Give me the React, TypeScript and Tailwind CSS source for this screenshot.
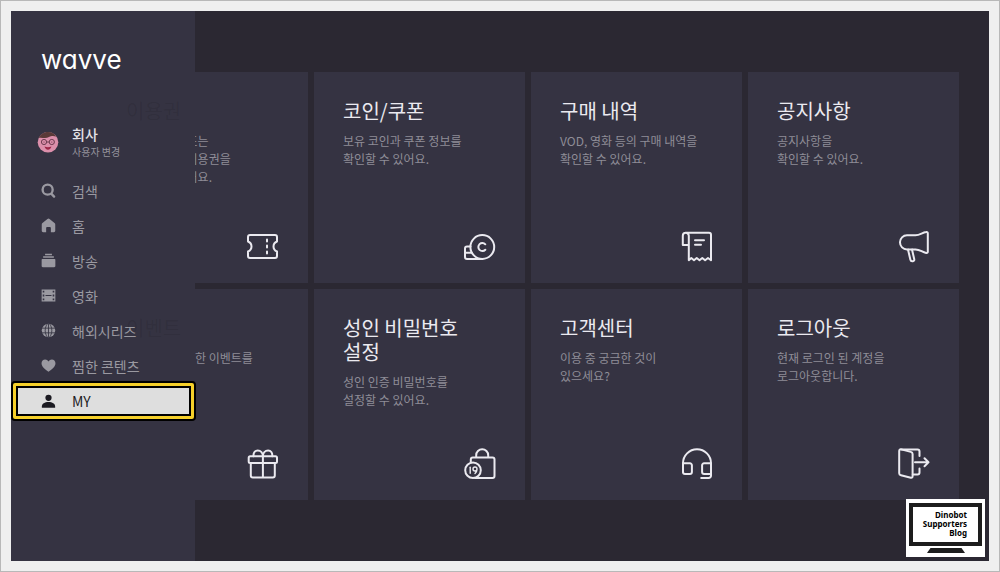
import type { ReactNode } from "react";

type MenuItem = { label: string; icon: ReactNode };

type Card = {
  title: string[];
  description: string[];
  icon: ReactNode;
  covered?: boolean;
};

const menu: MenuItem[] = [
  {
    label: "검색",
    icon: (
      <g fill="none" stroke="currentColor" strokeWidth="2.2" strokeLinecap="round">
        <circle cx="6.2" cy="6.2" r="4.7" />
        <path d="M9.8 10.2l2.4 2.500" />
      </g>
    ),
  },
  {
    label: "홈",
    icon: (
      <path
        d="M6 .9a1.600 1.600 0 0 1 2 0l4.600 3.800c.4.300.7.800.7 1.300v6c0 .8-.5 1.300-1.300 1.300H9.200V9.600c0-.8-.4-1.200-1.100-1.200H5.900c-.7 0-1.100.4-1.100 1.200v3.700H2C1.200 13.300.7 12.800.7 12V6c0-.5.3-1 .7-1.300z"
        fill="currentColor"
      />
    ),
  },
  {
    label: "방송",
    icon: (
      <path
        d="M3.800.8h6.400v1.300H3.800zM2 3.100h10v1.400H2zM1.200 5.600h11.600c.4 0 .6.200.6.600v5.900c0 .7-.4 1.100-1.100 1.100H1.700c-.7 0-1.100-.4-1.100-1.100V6.200c0-.4.2-.6.6-.6z"
        fill="currentColor"
      />
    ),
  },
  {
    label: "영화",
    icon: (
      <path
        d="M.6 1.300h12.800v11.400H.6zM1.600 2.500v1.700h1.500V2.500zM1.600 6.100v1.800h1.500V6.100zM1.600 9.800v1.700h1.500V9.800zM10.900 2.500v1.700h1.500V2.500zM10.900 6.100v1.800h1.500V6.100zM10.900 9.800v1.700h1.500V9.800zM4.200 6.600v.8h5.600v-.8z"
        fill="currentColor"
        fillRule="evenodd"
      />
    ),
  },
  {
    label: "해외시리즈",
    icon: (
      <g>
        <circle cx="7" cy="7" r="6.300" fill="currentColor" />
        <path
          d="M.7 4.800h12.600M.7 9.200h12.600M7 .7v12.600M6 .7C3.200 4.500 3.200 9.500 6 13.300M8 .7c2.800 3.800 2.800 8.800 0 12.600"
          fill="none"
          stroke="#353342"
          strokeWidth="0.800"
        />
      </g>
    ),
  },
  {
    label: "찜한 콘텐츠",
    icon: (
      <path
        d="M7 12.900C3.400 10.400.5 8 .5 5 .5 3 2 1.500 3.900 1.500c1.200 0 2.400.7 3.100 1.800.7-1.100 1.900-1.800 3.100-1.800C12 1.500 13.500 3 13.500 5c0 3-2.900 5.400-6.500 7.900z"
        fill="currentColor"
      />
    ),
  },
];

const cards: Card[] = [
  {
    title: ["이용권"],
    description: ["이용권 구매 또는", "보유하신 내 이용권을", "확인할 수 있어요."],
    covered: true,
    icon: (
      <>
        <path d="M3 4h25a2 2 0 0 1 2 2v4.500c-2 .8-3.500 2.600-3.500 5s1.500 4.200 3.500 5V25a2 2 0 0 1-2 2H3a2 2 0 0 1-2-2v-4.500c2-.8 3.500-2.600 3.500-5s-1.500-4.200-3.500-5V6a2 2 0 0 1 2-2z" />
        <path d="M20 8.500v2M20 14.500v2M20 20.500v2" />
      </>
    ),
  },
  {
    title: ["코인/쿠폰"],
    description: ["보유 코인과 쿠폰 정보를", "확인할 수 있어요."],
    icon: (
      <>
        <circle cx="18.300" cy="16" r="11.900" />
        <path d="M21.300 13.300a4 4 0 1 0 0 5.400M6.500 15.500H3a2 2 0 0 0-2 2v8.400a2 2 0 0 0 2 2h15.300M1 21.700h6.500" />
      </>
    ),
  },
  {
    title: ["구매 내역"],
    description: ["VOD, 영화 등의 구매 내역을", "확인할 수 있어요."],
    icon: (
      <>
        <path d="M4.500 1.800H28a2 2 0 0 1 2 2v25.400l-3-2.200-2.900 2.200-2.800-2.200-2.800 2.200-2.800-2.200-2.700 2.200-2.700-2.200-2.500 2.200V4.800a3 3 0 0 0-6 0V14h6" />
        <path d="M14 9.300h9M14 13.700h6" />
      </>
    ),
  },
  {
    title: ["공지사항"],
    description: ["공지사항을", "확인할 수 있어요."],
    icon: (
      <>
        <path d="M9 4.300h8.500c4.500 0 6.500-2.600 10.700-3.200 1-.2 1.600.4 1.600 1.300v18.300c0 1-.6 1.500-1.600 1.300-4.200-.8-6.200-3.600-10.700-3.600H9A7.050 7.050 0 0 1 9 4.300z" />
        <path d="M10 18.600l2.400 10.200c.3 1.300 1.200 1.700 2.400 1.500 1.200-.3 1.700-1.100 1.400-2.300L14 18.600" />
      </>
    ),
  },
  {
    title: ["이벤트"],
    description: ["진행중인 다양한 이벤트를", "만나보세요."],
    covered: true,
    icon: (
      <>
        <rect x="1.700" y="8.300" width="28.300" height="6.800" rx="1.500" />
        <path d="M3.800 15.200v12.300a2 2 0 0 0 2 2h20a2 2 0 0 0 2-2V15.200M15.900 8.300v21.200" />
        <path d="M6.500 8.200c-.3-3.400 1.500-5.800 4.200-5.800 3 0 5.200 2.600 5.200 5.900 0-3.300 2.200-5.900 5.200-5.900 2.700 0 4.500 2.400 4.200 5.800" />
      </>
    ),
  },
  {
    title: ["성인 비밀번호", "설정"],
    description: ["성인 인증 비밀번호를", "설정할 수 있어요."],
    icon: (
      <>
        <path d="M6.800 14v-2.500a2 2 0 0 1 2-2h19.700a2 2 0 0 1 2 2V28a2 2 0 0 1-2 2H11M12.200 9.500V7.200a6 6 0 0 1 12 0v2.300" />
        <circle cx="9" cy="22.300" r="7.800" />
        <path d="M6.200 19.300v6" strokeWidth="1.400" />
        <path d="M13 21a2 2 0 1 0-4 0 2 2 0 0 0 4 0c0 2-.8 3.400-2 4.500" strokeWidth="1.400" />
      </>
    ),
  },
  {
    title: ["고객센터"],
    description: ["이용 중 궁금한 것이", "있으세요?"],
    icon: (
      <>
        <path d="M2 24V15.300a14 14 0 0 1 28 0v12.400a2.300 2.300 0 0 1-2.300 2.300h-7.500" />
        <path d="M2 15.300h6.900a2 2 0 0 1 2 2v6.700a2 2 0 0 1-2 2H4a2 2 0 0 1-2-2zM30 15.300h-6.900a2 2 0 0 0-2 2v6.700a2 2 0 0 0 2 2H30" />
      </>
    ),
  },
  {
    title: ["로그아웃"],
    description: ["현재 로그인 된 계정을", "로그아웃합니다."],
    icon: (
      <>
        <path d="M3.300 1.400l9.500 2.500c1.200.3 1.800 1 1.800 2.100v22.300c0 1.200-.7 1.700-1.800 1.400L3 27.300c-1.200-.3-1.800-1-1.800-2.100V3c0-1.200.9-1.900 2.100-1.600z" />
        <path d="M3.300 1.400h16.200a2 2 0 0 1 2 2v4.500M14.800 26.600h4.700a2 2 0 0 0 2-2v-4.100M17 14.300h13.500M26.500 10.300l4 4-4 4" />
      </>
    ),
  },
];

function Avatar() {
  return (
    <svg viewBox="0 0 22 22" className="size-[22px] shrink-0" aria-hidden="true">
      <circle cx="11" cy="11.300" r="10.300" fill="#dc8fab" />
      <path d="M1.800 7C3.200 3.300 6.800.9 11 .9c3.600 0 6.600 1.800 8.300 4.500-3-.6-4.800-.8-7.300.7C8.500 8.200 4.800 6.200 1.800 7z" fill="#5a3a38" />
      <g fill="none" stroke="#6d3c50" strokeWidth="1">
        <circle cx="7" cy="11" r="2.600" />
        <circle cx="14.800" cy="11" r="2.600" />
        <path d="M9.600 11h2.600" />
      </g>
      <circle cx="7" cy="11" r=".6" fill="#6d3c50" />
      <circle cx="14.800" cy="11" r=".6" fill="#6d3c50" />
      <path d="M7.500 15.600c2.200.8 4.700.8 6.900 0-.4 2-1.700 3.100-3.400 3.100s-3-1.100-3.500-3.100z" fill="#9c2747" />
    </svg>
  );
}

function Sidebar() {
  return (
    <aside className="absolute inset-y-0 left-0 z-10 w-[184px] bg-[#353342]">
      <div className="pt-[31px] pl-[30px] font-[Inter,sans-serif] text-[26px] leading-9 text-white [font-feature-settings:'cv11']">
        wavve
      </div>

      <button className="mt-[46px] flex items-center gap-[13px] pl-[26px] text-left">
        <Avatar />
        <span className="flex flex-col">
          <span className="text-sm leading-5 font-medium text-[#e4e3e8]">회사</span>
          <span className="text-[10px] leading-4 text-[#94929c]">사용자 변경</span>
        </span>
      </button>

      <nav className="mt-[13px]">
        {menu.map((item) => (
          <a
            key={item.label}
            href="#"
            className="flex h-[35px] items-center gap-4 pl-[30px] text-sm text-[#9a99a1]"
          >
            <svg viewBox="0 0 14 14" className="size-[15px] shrink-0" aria-hidden="true">
              {item.icon}
            </svg>
            {item.label}
          </a>
        ))}
        <a
          href="#"
          aria-current="page"
          className="-mt-0.5 -mr-px flex h-10 rounded-sm border-2 border-black bg-[#f6d02a] p-[3px]"
        >
          <span className="flex flex-1 items-center gap-4 border-2 border-black bg-[#dedede] pl-[23px] text-sm text-[#1c1b22]">
            <svg viewBox="0 0 14 14" className="size-[15px] shrink-0" aria-hidden="true">
              <circle cx="7" cy="3.600" r="2.900" fill="currentColor" />
              <path d="M.8 12.800v-1.200C.8 9 3.500 7.500 7 7.500s6.200 1.500 6.200 4.100v1.200z" fill="currentColor" />
            </svg>
            MY
          </span>
        </a>
      </nav>
    </aside>
  );
}

function MenuCard({ card }: { card: Card }) {
  return (
    <button className="flex aspect-square flex-col bg-[#353342] pt-[27px] pr-[29px] pb-5 pl-[29px] text-left">
      {/* titles under the drawer stay faintly readable through it */}
      <span
        className={
          card.covered
            ? "relative z-20 text-xl leading-6 text-black/8"
            : "text-xl leading-6 text-[#ebeaf0]"
        }
      >
        {card.title.map((line) => (
          <span key={line} className="block whitespace-nowrap">
            {line}
          </span>
        ))}
      </span>
      <span className="mt-[9px] text-xs leading-[18px] text-[#8f8d97]">
        {card.description.map((line) => (
          <span key={line} className="block whitespace-nowrap">
            {line}
          </span>
        ))}
      </span>
      <svg
        viewBox="0 0 32 32"
        className="mt-auto size-8 self-end overflow-visible"
        fill="none"
        stroke="#ebeaf0"
        strokeWidth="2"
        strokeLinecap="round"
        strokeLinejoin="round"
        aria-hidden="true"
      >
        {card.icon}
      </svg>
    </button>
  );
}

function BlogBadge() {
  return (
    <div className="absolute right-1 bottom-1 z-10 flex w-[79px] flex-col items-center bg-white px-[3px] py-1">
      <div className="w-full border-4 border-[#1d1d1d] bg-white pt-[3px] pr-[11px] pb-[5px] text-right font-['Noto_Sans',sans-serif] text-[8px] leading-[9px] font-bold text-black">
        <div>Dinobot</div>
        <div>Supporters</div>
        <div>Blog</div>
      </div>
      <svg viewBox="0 0 38 5" className="mt-0.5 h-[5px] w-[38px]" aria-hidden="true">
        <path d="M3.500 0h31L38 5H0z" fill="#1d1d1d" />
      </svg>
    </div>
  );
}

export default function App() {
  return (
    <div className="flex min-h-screen border border-[#b8b8b8] bg-[#efefef] p-2.5 font-['Noto_Sans_CJK_KR',sans-serif]">
      <div className="relative flex-1 bg-[#2b2832]">
        <Sidebar />
        <main className="grid grid-cols-4 gap-1.5 pt-[61px] pr-[30px] pb-[61px] pl-[86px]">
          {cards.map((card) => (
            <MenuCard key={card.title[0]} card={card} />
          ))}
        </main>
        <BlogBadge />
      </div>
    </div>
  );
}
